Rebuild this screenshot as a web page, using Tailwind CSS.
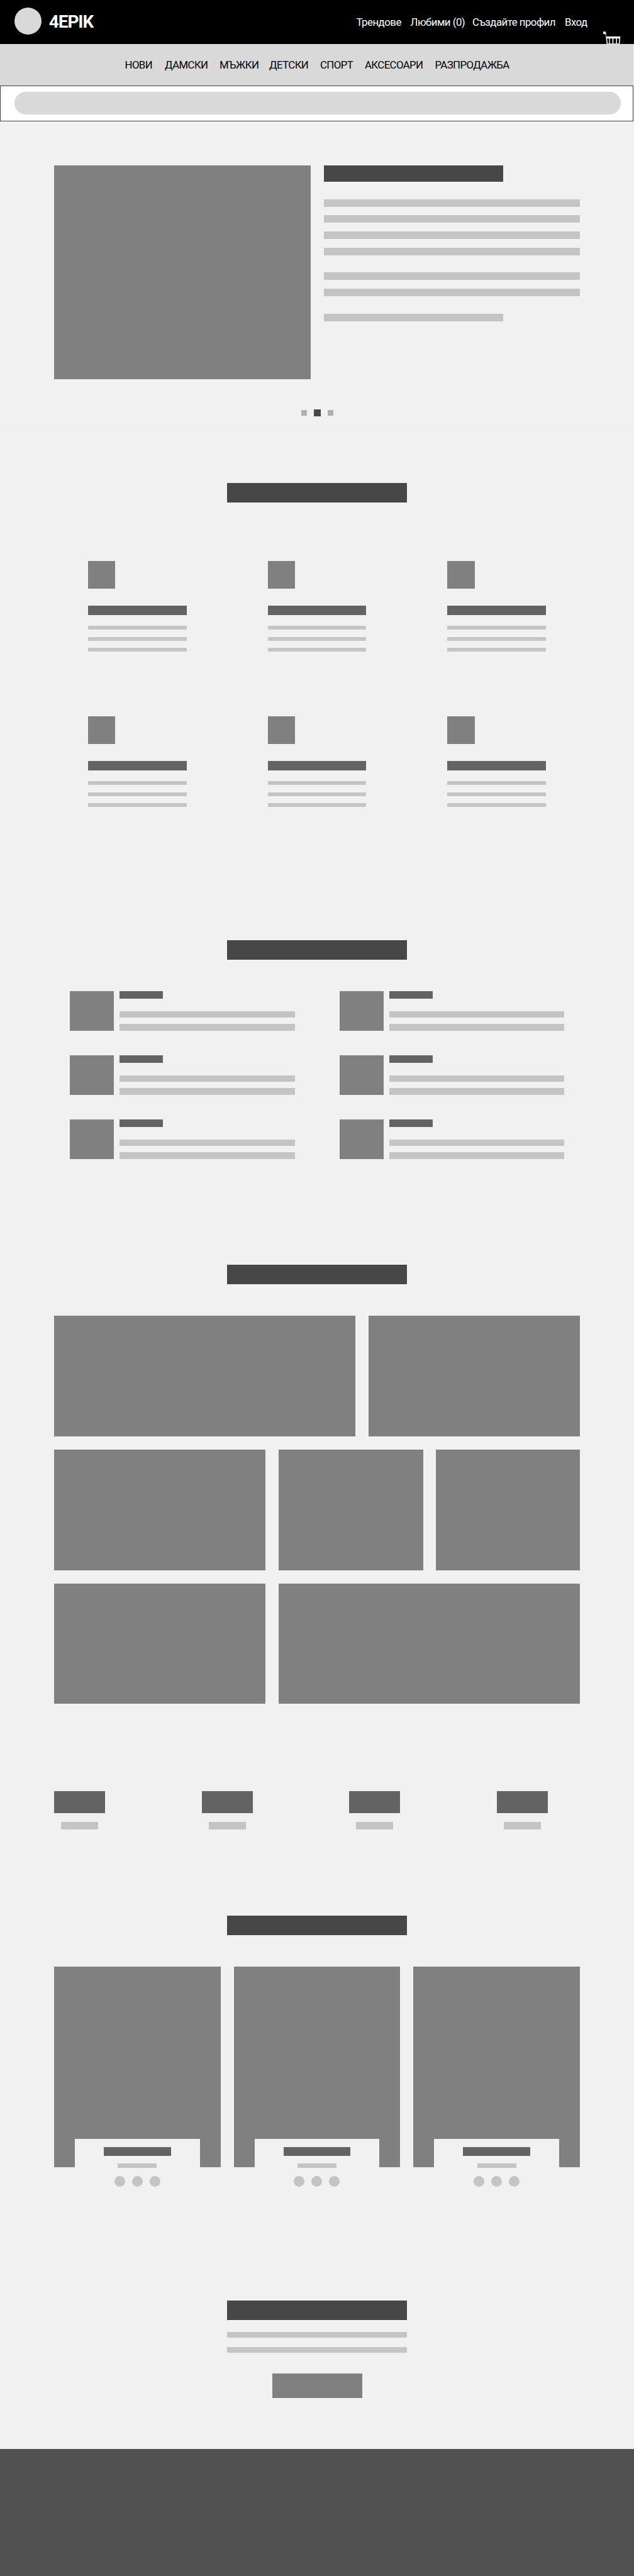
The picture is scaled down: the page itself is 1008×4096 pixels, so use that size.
<!DOCTYPE html>
<html lang="bg">
<head>
<meta charset="utf-8">
<title>4EPIK</title>
<script src="https://cdn.jsdelivr.net/npm/@tailwindcss/browser@4"></script>
</head>
<body class="w-[1008px] h-[4096px] bg-[#f1f1f1] font-[Roboto,sans-serif] flex flex-col overflow-x-hidden">

<header class="h-[70px] shrink-0 bg-black text-white flex items-start pl-[23px] pr-[21px] overflow-hidden">
  <div class="size-[43px] mt-[12px] rounded-full bg-[#d9d9d9]"></div>
  <div class="ml-[12px] mt-[18px] text-[28px] leading-[34px] font-bold tracking-[-0.04em] w-[80px] whitespace-nowrap">4EPIK</div>
  <nav class="ml-[409px] mt-[25px] flex text-[16.8px] leading-[20px] whitespace-nowrap tracking-[-0.03em]">
    <a class="w-[86px]">Трендове</a>
    <a class="w-[98.500px]">Любими (0)</a>
    <a class="w-[147px]">Създайте профил</a>
    <a class="w-[61px]">Вход</a>
  </nav>
  <svg class="mt-[50px] w-[28px] h-[28px] shrink-0" viewBox="0 0 40 40" fill="#fff">
    <path d="M0 1.500Q0 .5 1 .5H5Q6 .5 6.200 1.500L7 11.500H38Q39 11.500 39 12.500L37.500 29H8L5.500 6H1.500Q0 6 0 4.500ZM9 16L10 27.500H13.200V16ZM15.200 16V27.500H21V16ZM23.300 16V27.500H29.200V16ZM31.400 16V27.500H35.400L36.500 16Z" fill-rule="evenodd"/>
  </svg>
</header>

<nav class="h-[66px] shrink-0 mr-px bg-[#d9d9d9] flex pt-[23px] pl-[198.500px] text-[16.8px] leading-[20px] whitespace-nowrap tracking-[-0.035em] text-black">
  <a class="w-[63.500px]">НОВИ</a>
  <a class="w-[87px]">ДАМСКИ</a>
  <a class="w-[79px]">МЪЖКИ</a>
  <a class="w-[81px]">ДЕТСКИ</a>
  <a class="w-[71px]">СПОРТ</a>
  <a class="w-[111.500px]">АКСЕСОАРИ</a>
  <a>РАЗПРОДАЖБА</a>
</nav>

<div class="h-[57px] shrink-0 mr-px bg-white border border-[#404040] pt-[9px] pl-[22px] pr-[19px]">
  <div class="h-[36px] rounded-full bg-[#d9d9d9]"></div>
</div>

<section class="h-[490px] shrink-0 pt-[70px] px-[86px] border-b border-[#f4f4f4]">
  <div class="grid grid-cols-2 gap-[21px]">
    <div class="h-[340px] bg-[#808080]"></div>
    <div class="flex flex-col">
      <div class="w-[285.6px] h-[26px] bg-[#474747]"></div>
      <div class="mt-[28px] h-[12px] bg-[#c4c4c4]"></div>
      <div class="mt-[13px] h-[12px] bg-[#c4c4c4]"></div>
      <div class="mt-[14px] h-[12px] bg-[#c4c4c4]"></div>
      <div class="mt-[14px] h-[12px] bg-[#c4c4c4]"></div>
      <div class="mt-[27px] h-[12px] bg-[#c4c4c4]"></div>
      <div class="mt-[14px] h-[12px] bg-[#c4c4c4]"></div>
      <div class="mt-[28px] h-[12px] w-[285.6px] bg-[#c4c4c4]"></div>
    </div>
  </div>
  <div class="mt-[48px] flex items-center justify-center gap-[11px]">
    <div class="size-[9px] bg-[#b0b0b0]"></div>
    <div class="size-[11px] bg-[#474747]"></div>
    <div class="size-[9px] bg-[#b0b0b0]"></div>
  </div>
</section>

<section class="h-[812px] shrink-0 pt-[85px]">
  <div class="mx-auto w-[285.6px] h-[31px] bg-[#474747]"></div>
  <div id="features" class="mt-[93px] pl-[140px] grid grid-cols-[repeat(3,285.6px)] auto-rows-[247px]"></div>
</section>

<section class="h-[516px] shrink-0">
  <div class="mx-auto w-[285.6px] h-[31px] bg-[#474747]"></div>
  <div id="items" class="mt-[50px] pl-[111.400px] grid grid-cols-[repeat(2,428.2px)] auto-rows-[102.2px]"></div>
</section>

<section class="h-[837px] shrink-0">
  <div class="mx-auto w-[285.6px] h-[31px] bg-[#474747]"></div>
  <div class="mt-[50px] px-[86px] flex flex-col gap-[21px]">
    <div class="flex gap-[21px] h-[191.8px]">
      <div class="w-[479px] bg-[#808080]"></div><div class="flex-1 bg-[#808080]"></div>
    </div>
    <div class="flex gap-[20px] h-[191.8px]">
      <div class="w-[336px] mr-[1px] bg-[#808080]"></div><div class="flex-1 bg-[#808080]"></div><div class="flex-1 bg-[#808080]"></div>
    </div>
    <div class="flex gap-[21px] h-[191.8px]">
      <div class="w-[336px] bg-[#808080]"></div><div class="flex-1 bg-[#808080]"></div>
    </div>
  </div>
</section>

<section id="stats" class="h-[198px] shrink-0 pl-[86px] grid grid-cols-[repeat(4,234.5px)]"></section>

<section class="h-[612px] shrink-0">
  <div class="mx-auto w-[285.6px] h-[31px] bg-[#474747]"></div>
  <div id="cards" class="mt-[50px] px-[86px] grid grid-cols-3 gap-[21px]"></div>
</section>

<section class="h-[236px] shrink-0 flex flex-col items-center">
  <div class="w-[285.6px] h-[31px] bg-[#474747]"></div>
  <div class="mt-[19px] w-[285.6px] h-[9px] bg-[#c4c4c4]"></div>
  <div class="mt-[15px] w-[285.6px] h-[8.500px] bg-[#c4c4c4]"></div>
  <div class="mt-[33.500px] w-[143px] h-[39px] bg-[#808080]"></div>
</section>

<footer class="flex-1 bg-[#515151]"></footer>

<script>
const fill = (id, n, html) => { document.getElementById(id).innerHTML = html.repeat(n); };
fill('features', 6, `<div>
  <div class="w-[43.400px] h-[44px] bg-[#808080]"></div>
  <div class="mt-[27px] w-[156.8px] h-[15px] bg-[#636363]"></div>
  <div class="mt-[17px] w-[156.8px] h-[6px] bg-[#c4c4c4]"></div>
  <div class="mt-[12px] w-[156.8px] h-[6px] bg-[#c4c4c4]"></div>
  <div class="mt-[11px] w-[156.8px] h-[6px] bg-[#c4c4c4]"></div>
</div>`);
fill('items', 6, `<div class="flex gap-[9px]">
  <div class="w-[70px] h-[63px] bg-[#808080]"></div>
  <div>
    <div class="w-[69px] h-[12px] bg-[#636363]"></div>
    <div class="mt-[19.500px] w-[278.500px] h-[10.500px] bg-[#c4c4c4]"></div>
    <div class="mt-[10px] w-[278.500px] h-[10.500px] bg-[#c4c4c4]"></div>
  </div>
</div>`);
fill('stats', 4, `<div class="w-[81px] flex flex-col items-center">
  <div class="w-full h-[35px] bg-[#636363]"></div>
  <div class="mt-[14px] w-[59px] h-[12px] bg-[#c4c4c4]"></div>
</div>`);
fill('cards', 3, `<div>
  <div class="h-[274px] bg-[#808080]"></div>
  <div class="h-[44.500px] border-x-[33px] border-[#808080] pt-[12.500px] flex flex-col items-center">
    <div class="w-[106.500px] h-[14px] shrink-0 bg-[#636363]"></div>
    <div class="mt-[12.500px] w-[62px] h-[6.500px] shrink-0 bg-[#c4c4c4]"></div>
  </div>
  <div class="mt-[14px] flex justify-center gap-[11px]">
    <div class="size-[17px] rounded-full bg-[#c4c4c4]"></div>
    <div class="size-[17px] rounded-full bg-[#c4c4c4]"></div>
    <div class="size-[17px] rounded-full bg-[#c4c4c4]"></div>
  </div>
</div>`);
</script>
</body>
</html>
